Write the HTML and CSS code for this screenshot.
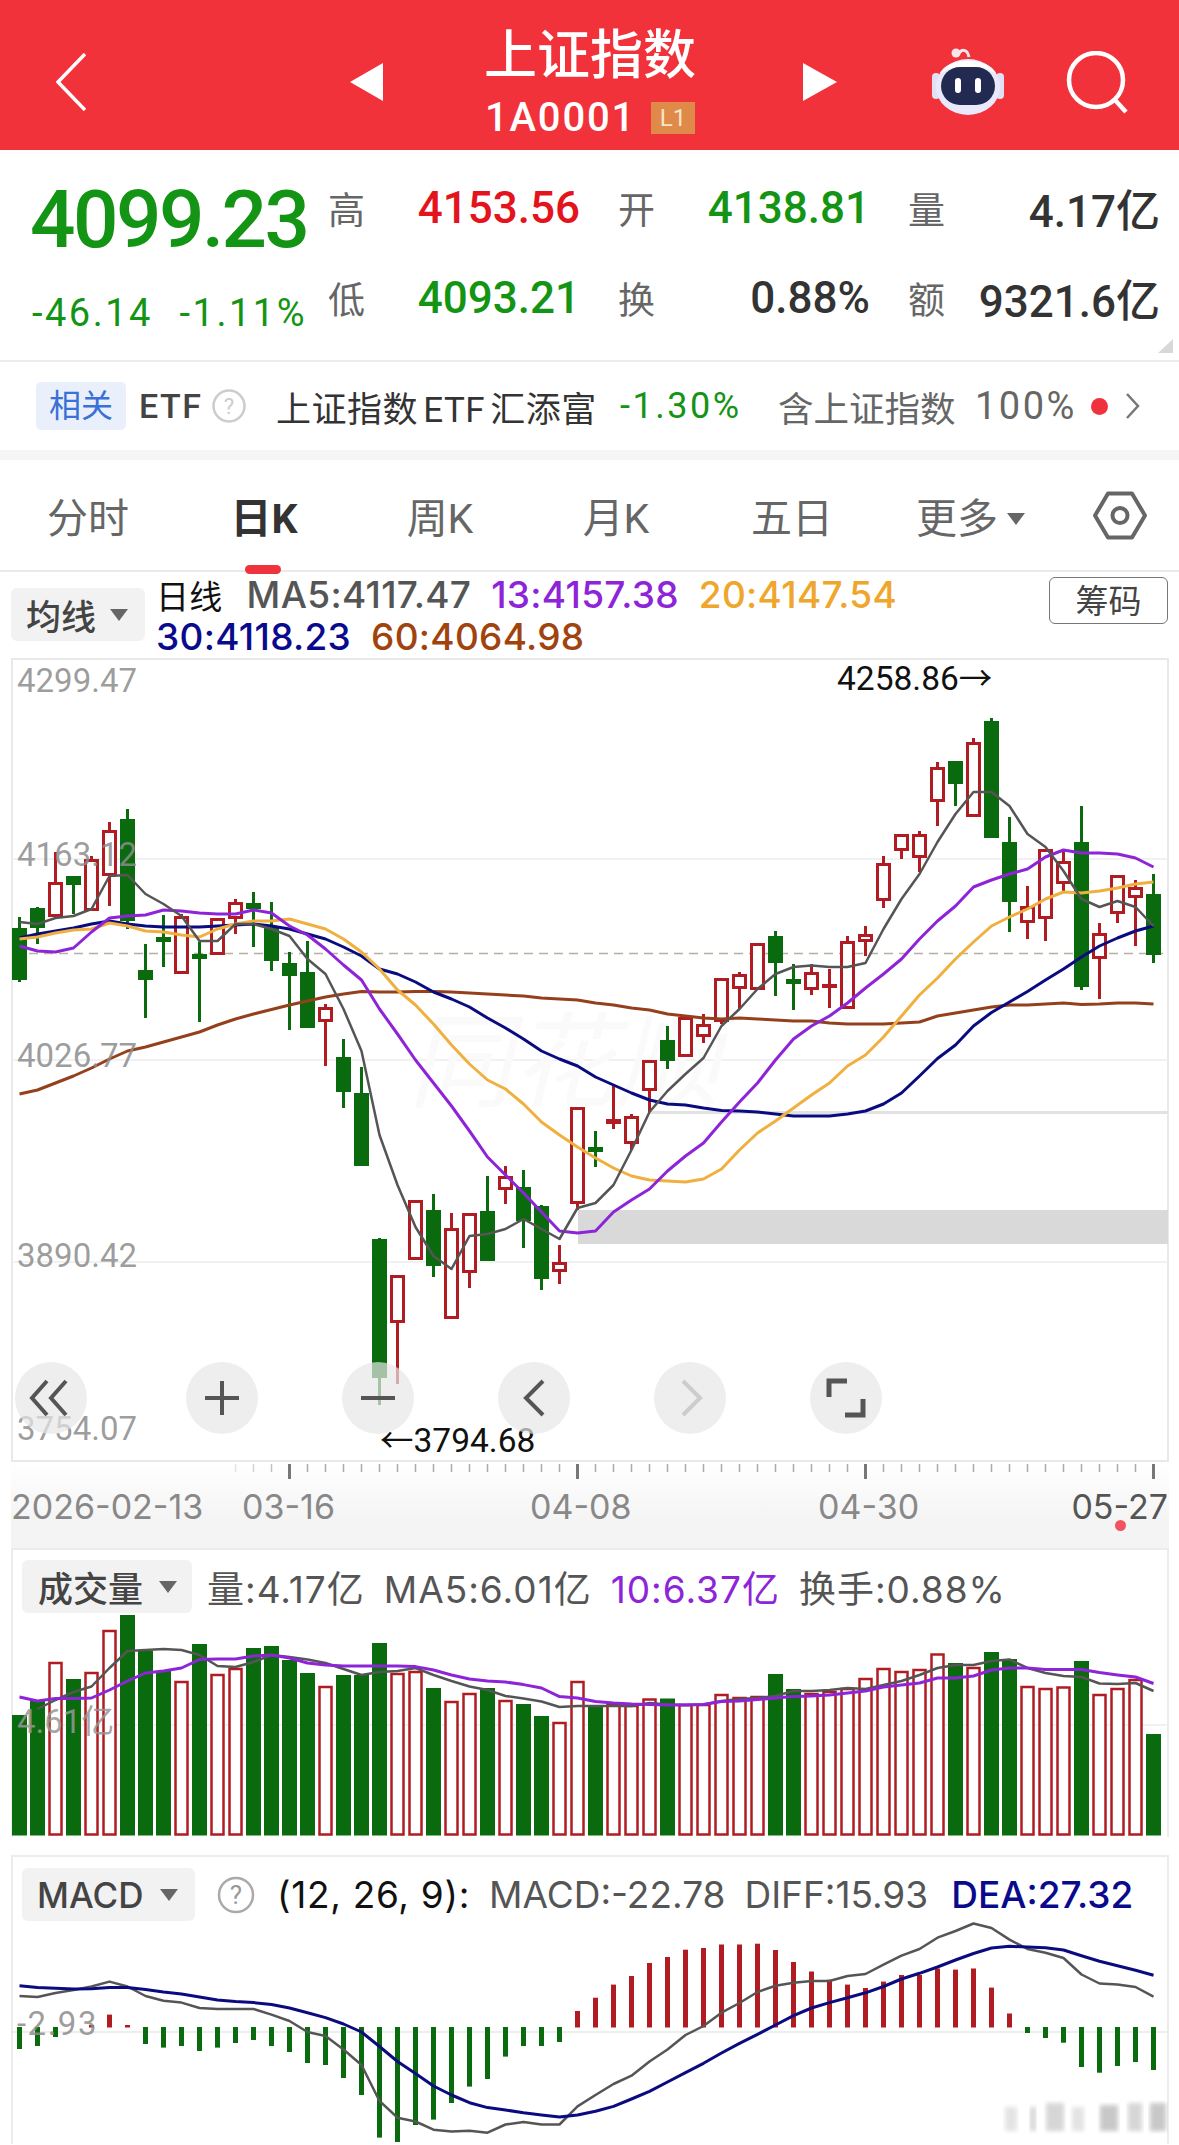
FILE: index.html
```html
<!DOCTYPE html>
<html lang="zh">
<head>
<meta charset="utf-8">
<title>上证指数</title>
<link rel="stylesheet" href="styles.css">
</head>
<body>
<header class="hdr">
  <svg class="ic-back" width="30" height="58" viewBox="0 0 30 58"><path d="M29 1 2 29l27 28" fill="none" stroke="#fff" stroke-width="3.5"/></svg>
  <span class="tri tri-l"></span>
  <div class="title">
    <div class="title-name">上证指数</div>
    <div class="title-code"><span>1A0001</span><span class="badge">L1</span></div>
  </div>
  <span class="tri tri-r"></span>
  <svg class="ic-robot" width="76" height="68" viewBox="0 0 76 68">
    <path d="M28 8c3-6 9-7 11 2" fill="none" stroke="#f4e8ee" stroke-width="3"/>
    <circle cx="26" cy="6" r="4.5" fill="#f6e6ea"/>
    <rect x="2" y="26" width="8" height="26" rx="4" fill="#dfe0f5"/>
    <rect x="66" y="26" width="8" height="26" rx="4" fill="#dfe0f5"/>
    <ellipse cx="38" cy="40" rx="32" ry="28" fill="#e9e9fb"/>
    <path d="M9 28C16 9 60 9 67 28 58 17 18 17 9 28Z" fill="#fff"/>
    <rect x="11" y="20" width="54" height="38" rx="19" fill="#232a52"/>
    <rect x="25" y="31" width="6" height="15" rx="3" fill="#fff"/>
    <rect x="45" y="31" width="6" height="15" rx="3" fill="#fff"/>
  </svg>
  <svg class="ic-search" width="66" height="66" viewBox="0 0 66 66"><circle cx="30" cy="29" r="27" fill="none" stroke="#fff" stroke-width="4.5"/><path d="M49 49l11 12" stroke="#fff" stroke-width="4.5"/></svg>
</header>

<section class="stats">
  <div class="quote">
    <div class="price">4099.23</div>
    <div class="change"><span>-46.14</span><span>-1.11%</span></div>
  </div>
  <div class="grid">
    <div class="cell"><span class="lab">高</span><span class="val up">4153.56</span></div>
    <div class="cell"><span class="lab">开</span><span class="val dn">4138.81</span></div>
    <div class="cell"><span class="lab">量</span><span class="val">4.17亿</span></div>
    <div class="cell"><span class="lab">低</span><span class="val dn">4093.21</span></div>
    <div class="cell"><span class="lab">换</span><span class="val">0.88%</span></div>
    <div class="cell"><span class="lab">额</span><span class="val">9321.6亿</span></div>
  </div>
  <span class="corner"></span>
</section>

<section class="etf">
  <span class="etf-tag">相关</span>
  <span class="etf-name">ETF</span>
  <svg class="q q-etf" width="34" height="34" viewBox="0 0 34 34"><circle cx="17" cy="17" r="15.5" fill="none" stroke="#ccc" stroke-width="2.5"/><text x="17" y="25" class="q-t q-t-light">?</text></svg>
  <span class="etf-fund">上证指数 ETF 汇添富</span>
  <span class="etf-pct">-1.30%</span>
  <span class="etf-inc">含上证指数</span>
  <span class="etf-num">100%</span>
  <span class="etf-dot"></span>
  <svg class="etf-more" width="14" height="26" viewBox="0 0 14 26"><path d="M1 1l11 12L1 25" fill="none" stroke="#777" stroke-width="2.5"/></svg>
</section>

<nav class="tabs">
  <span class="tab">分时</span>
  <span class="tab tab-on">日K</span>
  <span class="tab">周K</span>
  <span class="tab">月K</span>
  <span class="tab">五日</span>
  <span class="tab tab-more">更多<i class="caret caret-tab"></i></span>
  <svg class="ic-hex" width="54" height="49" viewBox="0 0 54 49"><path d="M2 24.500 15 2.500h24l13 22-13 22H15Z" fill="none" stroke="#666" stroke-width="4" stroke-linejoin="round"/><circle cx="27" cy="24.500" r="7.500" fill="none" stroke="#666" stroke-width="4"/></svg>
</nav>

<section class="legend">
  <div class="sel sel-ma">均线<i class="caret"></i></div>
  <div class="legend-lines">
    <div class="leg-row">
      <span class="leg-name">日线</span>
      <span class="c-gray">MA5:4117.47</span>
      <span class="c-purple">13:4157.38</span>
      <span class="c-orange">20:4147.54</span>
    </div>
    <div class="leg-row">
      <span class="c-navy">30:4118.23</span>
      <span class="c-brown">60:4064.98</span>
    </div>
  </div>
  <div class="chip">筹码</div>
</section>

<section class="main">
  <svg id="kline" class="plot" width="1158" height="804" viewBox="11 659 1158 804"></svg>
  <span class="plabel p1">4299.47</span>
  <span class="plabel p2">4163.12</span>
  <span class="plabel p3">4026.77</span>
  <span class="plabel p4">3890.42</span>
  <span class="plabel p5">3754.07</span>
  <span class="extreme ex-hi">4258.86→</span>
  <span class="extreme ex-lo">←3794.68</span>
  <div class="fabs">
    <span class="fab fab-first"><svg width="72" height="72" viewBox="0 0 72 72"><path d="M32 19 17 36l15 17M51 19 36 36l15 17" fill="none" stroke="#555" stroke-width="4"/></svg></span>
    <span class="fab"><svg width="72" height="72" viewBox="0 0 72 72"><path d="M19 36h34M36 19v34" stroke="#555" stroke-width="4"/></svg></span>
    <span class="fab"><svg width="72" height="72" viewBox="0 0 72 72"><path d="M19 36h34" stroke="#555" stroke-width="4"/></svg></span>
    <span class="fab"><svg width="72" height="72" viewBox="0 0 72 72"><path d="M45 19 28 36l17 17" fill="none" stroke="#555" stroke-width="4"/></svg></span>
    <span class="fab"><svg width="72" height="72" viewBox="0 0 72 72"><path d="M29 19l17 17-17 17" fill="none" stroke="#ccc" stroke-width="4"/></svg></span>
    <span class="fab"><svg width="72" height="72" viewBox="0 0 72 72"><path d="M37 19H19v16M53 37v16H35" fill="none" stroke="#555" stroke-width="5"/></svg></span>
  </div>
</section>

<section class="xaxis">
  <svg id="ticks" class="ticks" width="1158" height="20" viewBox="11 1463 1158 20"></svg>
  <span class="xl x1">2026-02-13</span>
  <span class="xl x2">03-16</span>
  <span class="xl x3">04-08</span>
  <span class="xl x4">04-30</span>
  <span class="xl x5">05-27</span>
  <span class="xdot"></span>
</section>

<section class="panel panel-vol">
  <div class="pnl-head pnl-head-v">
    <div class="sel sel-vol">成交量<i class="caret"></i></div>
    <span class="c-gray">量:4.17亿</span>
    <span class="c-gray">MA5:6.01亿</span>
    <span class="c-purple">10:6.37亿</span>
    <span class="c-gray">换手:0.88%</span>
  </div>
  <svg id="vol" class="plot" width="1158" height="287" viewBox="11 1551 1158 287"></svg>
  <span class="plabel vl">4.61亿</span>
</section>

<section class="panel panel-macd">
  <div class="pnl-head pnl-head-m">
    <div class="sel sel-macd">MACD<i class="caret"></i></div>
    <svg class="q q-macd" width="38" height="38" viewBox="0 0 38 38"><circle cx="19" cy="19" r="17" fill="none" stroke="#aaa" stroke-width="2.500"/><text x="19" y="28" class="q-t">?</text></svg>
    <span class="c-black c-params">(12, 26, 9):</span>
    <span class="c-gray">MACD:-22.78</span>
    <span class="c-gray">DIFF:15.93</span>
    <span class="c-navy c-b">DEA:27.32</span>
  </div>
  <svg id="macd" class="plot" width="1158" height="287" viewBox="11 1858 1158 287"></svg>
  <span class="plabel ml">-2.93</span>
</section>

<script src="chart.js"></script>
</body>
</html>
```

FILE: styles.css
```css
* { box-sizing: border-box; }
html, body { margin: 0; padding: 0; background: #fff; }
body {
  width: 1179px;
  height: 2145px;
  overflow: hidden;
  font-family: Roboto, "Noto Sans CJK SC", sans-serif;
  color: #333;
}

/* header */
.hdr {
  height: 150px;
  background: #f1323a;
  display: flex;
  align-items: center;
  padding-left: 56px;
  color: #fff;
}
.ic-back { margin-top: 14px; }
.tri { width: 0; height: 0; border-style: solid; margin-top: 14px; }
.tri-l { margin-left: 264px; border-width: 19px 33px 19px 0; border-color: transparent #fff transparent transparent; }
.tri-r { margin-left: 108px; border-width: 19px 0 19px 34px; border-color: transparent transparent transparent #fff; }
.title { margin-left: 101px; width: 211px; white-space: nowrap; }
.title-name { font-size: 53px; line-height: 60px; font-weight: 500; margin-top: 16px; }
.title-code { display: flex; align-items: center; gap: 15px; font-size: 40px; line-height: 44px; font-weight: 500; letter-spacing: 1.800px; padding-left: 1px; margin-top: 10px; }
.badge { width: 47px; height: 32px; background: #e08a4a; color: #f5e6c8; font-size: 24px; line-height: 32px; text-align: center; letter-spacing: 0; font-weight: 400; }
.ic-robot { margin-left: 93px; margin-top: 12px; }
.ic-search { margin-left: 60px; margin-top: 18px; }

/* quote block */
.stats {
  position: relative;
  height: 212px;
  display: flex;
  border-bottom: 2px solid #ececec;
}
.quote { width: 328px; padding: 25px 21px 0 30px; }
.price { font-size: 80px; line-height: 90px; font-weight: 500; letter-spacing: -2.500px; color: #149414; }
.change { display: flex; justify-content: space-between; font-size: 38px; line-height: 96px; letter-spacing: 2.500px; color: #149414; padding-left: 2px; }
.grid {
  width: 832px;
  padding-top: 13px;
  display: grid;
  grid-template-columns: repeat(3, 252px);
  grid-auto-rows: 90px;
  column-gap: 38px;
}
.cell { display: flex; justify-content: space-between; align-items: center; }
.lab { font-size: 37px; color: #666; }
.val { font-size: 44px; font-weight: 500; color: #333; }
.val.up { color: #e3141c; }
.val.dn { color: #149414; }
.corner { position: absolute; right: 6px; bottom: 7px; width: 0; height: 0; border-style: solid; border-width: 0 0 14px 15px; border-color: transparent transparent #d8d8d8 transparent; }

/* ETF strip */
.etf {
  height: 88px;
  display: flex;
  align-items: center;
  padding-left: 36px;
  font-size: 35px;
  white-space: nowrap;
}
.etf-tag { width: 90px; height: 48px; border-radius: 5px; background: #e9f0fb; color: #3a70d8; font-size: 32px; line-height: 48px; text-align: center; }
.etf-name { margin-left: 13px; width: 64px; font-size: 34px; font-weight: 500; letter-spacing: 1.500px; color: #444; }
.q-etf { margin-left: 9px; }
.q-t { font-family: Roboto, sans-serif; font-size: 26px; fill: #999; text-anchor: middle; }
.q-t-light { font-size: 22px; fill: #ccc; }
.etf-fund { margin-left: 30px; width: 344px; word-spacing: -4px; letter-spacing: .5px; color: #333; }
.etf-pct { width: 158px; font-size: 36px; letter-spacing: 2.500px; color: #149414; }
.etf-inc { width: 197px; font-size: 35.500px; color: #666; }
.etf-num { width: 115px; font-size: 38px; letter-spacing: 2.500px; color: #666; }
.etf-dot { width: 17px; height: 17px; border-radius: 50%; background: #f0323c; margin-left: 1px; }
.etf-more { margin-left: 18px; }

/* tabs */
.tabs {
  height: 122px;
  border-top: 10px solid #f5f5f5;
  border-bottom: 2px solid #eaeaea;
  display: grid;
  grid-template-columns: repeat(6, 176px) 1fr;
  align-items: center;
  font-size: 41px;
  color: #666;
}
.tab { position: relative; text-align: center; }
.tab-on { color: #333; font-weight: 700; }
.tab-on::after { content: ""; position: absolute; left: 69px; bottom: -29px; width: 36px; height: 9px; border-radius: 5px; background: #f0323c; }
.tab-more { padding-left: 5px; }
.ic-hex { margin-left: 37px; }
.caret { display: inline-block; width: 0; height: 0; margin-left: 14px; vertical-align: 3px; border-style: solid; border-width: 12px 9px 0 9px; border-color: #666 transparent transparent transparent; }
.caret-tab { margin-left: 9px; vertical-align: 8px; }

/* legend */
.legend {
  position: relative;
  height: 86px;
  padding-left: 11px;
  display: flex;
  font-family: Inter, "Noto Sans CJK SC", sans-serif;
  font-size: 37px;
  font-weight: 500;
  letter-spacing: .3px;
}
.sel { background: #f2f2f2; border-radius: 6px; color: #444; display: flex; align-items: center; font-weight: 500; letter-spacing: 0; }
.sel-ma { width: 134px; height: 53px; margin-top: 16px; padding-left: 15px; font-family: "Noto Sans CJK SC", sans-serif; font-size: 35px; }
.legend-lines { margin-left: 11px; padding-top: 2px; }
.leg-row { display: flex; gap: 20px; line-height: 42px; white-space: nowrap; }
.leg-name { color: #111; font-family: "Noto Sans CJK SC", sans-serif; font-size: 33px; font-weight: 400; margin-right: 4px; }
.c-gray { color: #555; }
.c-purple { color: #8e24d8; }
.c-orange { color: #efa62c; }
.c-navy { color: #0a0a8c; }
.c-brown { color: #a0430f; }
.c-black { color: #111; }
.c-b { font-weight: 500; margin-left: 4px; }
.chip { position: absolute; left: 1049px; top: 5px; width: 119px; height: 47px; border: 1.500px solid #777; border-radius: 6px; font-family: "Noto Sans CJK SC", sans-serif; font-size: 33px; font-weight: 400; letter-spacing: 0; line-height: 43px; text-align: center; color: #444; }

/* price chart */
.main {
  position: relative;
  margin-left: 11px;
  width: 1158px;
  height: 804px;
}
.plot { display: block; }
.plabel { position: absolute; left: 6px; font-size: 33px; line-height: 34px; color: rgba(140,140,140,.85); white-space: nowrap; }
.p1 { top: 6px; }
.p2 { top: 180px; }
.p3 { top: 381px; }
.p4 { top: 581px; }
.p5 { top: 754px; }
.extreme { position: absolute; font-size: 33.500px; line-height: 34px; color: #111; white-space: nowrap; }
.ex-hi { left: 826px; top: 4px; }
.ex-lo { left: 369px; top: 766px; }
.fabs { position: absolute; left: 4px; top: 704px; display: flex; gap: 84px; }
.fab { width: 72px; height: 72px; border-radius: 50%; background: rgba(231,231,231,.7); }
.fab-first { margin-right: 15px; }

/* date axis */
.xaxis {
  position: relative;
  margin-left: 11px;
  width: 1158px;
  height: 86px;
  background: linear-gradient(#fff, #f4f4f4 70%);
}
.ticks { display: block; }
.xl { position: absolute; top: 27px; font-family: Inter, Roboto, sans-serif; font-size: 34px; line-height: 36px; color: #888; white-space: nowrap; }
.x1 { left: 0; }
.x2 { left: 231px; }
.x3 { left: 519px; }
.x4 { left: 807px; }
.x5 { right: 1px; color: #555; }
.xdot { position: absolute; left: 1104px; top: 58px; width: 11px; height: 11px; border-radius: 50%; background: #f0555e; }

/* lower panels */
.panel {
  position: relative;
  margin-left: 11px;
  width: 1158px;
  height: 289px;
  border: 2px solid #ececec;
  border-bottom: 0;
}
.panel .plot { position: absolute; left: -2px; top: 0; }
.panel-macd { margin-top: 18px; }
.pnl-head {
  position: relative;
  z-index: 1;
  display: flex;
  align-items: center;
  gap: 19px;
  height: 53px;
  margin: 10px 0 0 9px;
  font-family: Inter, "Noto Sans CJK SC", sans-serif;
  font-size: 37px;
  white-space: nowrap;
}
.pnl-head-v { letter-spacing: 1px; }
.pnl-head-m { margin-top: 11px; }
.sel-vol { width: 170px; height: 53px; padding-left: 16px; font-family: "Noto Sans CJK SC", sans-serif; font-size: 35px; flex: none; margin-right: -4px; }
.sel-vol .caret { margin-left: 16px; }
.sel-macd { width: 173px; height: 53px; padding-left: 15px; font-size: 35px; flex: none; }
.sel-macd .caret { margin-left: 17px; }
.q-macd { margin: 0 3px 0 3px; flex: none; }
.c-params { letter-spacing: .7px; }
.vl { left: 4px; top: 155px; color: rgba(150,150,150,.85); }
.ml { left: 4px; top: 150px; letter-spacing: 1.500px; }
```

FILE: chart.js
```js
(function () {
  var NS = 'http://www.w3.org/2000/svg';
  var GREEN = '#0a6a0e', RED = '#b01c22';
  function X(i) { return 19.5 + 18 * i; }
  function el(svg, tag, attrs, text) {
    var n = document.createElementNS(NS, tag);
    for (var k in attrs) n.setAttribute(k, attrs[k]);
    if (text) n.textContent = text;
    svg.appendChild(n);
    return n;
  }
  function line(svg, ys, color, w, start) {
    var pts = ys.map(function (y, k) { return X(k + (start || 0)) + ',' + y; }).join(' ');
    el(svg, 'polyline', { points: pts, fill: 'none', stroke: color, 'stroke-width': w, 'stroke-linejoin': 'round' });
  }
  function hline(svg, y, c, w, x1, x2, dash) {
    var a = { x1: x1 || 11, x2: x2 || 1169, y1: y, y2: y, stroke: c, 'stroke-width': w };
    if (dash) a['stroke-dasharray'] = dash;
    el(svg, 'line', a);
  }

  /* type, wick top, body top, body bottom, wick bottom */
  var K = [
    'g',918,929,981,983,'g',908,909,929,945,'r',853,883,918,918,'g',877,877,886,915,
    'r',857,860,912,912,'r',823,831,877,907,'g',810,820,922,930,'g',945,971,981,1019,
    'g',916,938,943,968,'r',915,917,975,975,'g',943,955,960,1023,'r',919,919,956,956,
    'r',900,903,920,935,'g',893,904,910,948,'g',903,927,962,972,'g',953,964,977,1031,
    'g',942,973,1029,1029,'r',1005,1008,1023,1067,'g',1040,1058,1093,1109,'g',1068,1094,1167,1167,
    'g',1239,1240,1379,1406,'r',1276,1276,1324,1385,'r',1201,1201,1261,1261,'g',1195,1211,1267,1278,
    'r',1214,1229,1320,1320,'r',1214,1214,1274,1289,'g',1177,1212,1262,1262,'r',1167,1177,1191,1205,
    'g',1171,1188,1222,1249,'g',1206,1207,1280,1291,'r',1246,1263,1273,1285,'r',1108,1108,1205,1211,
    'g',1132,1148,1153,1168,'r',1085,1120,1125,1130,'r',1115,1117,1145,1151,'r',1061,1061,1092,1113,
    'g',1027,1041,1062,1070,'r',1017,1018,1058,1058,'r',1015,1025,1038,1044,'r',979,979,1023,1025,
    'r',973,975,990,1010,'r',944,944,991,991,'g',932,937,964,997,'g',965,980,985,1011,
    'r',965,973,991,996,'r',970,985,989,1009,'r',937,942,1010,1010,'r',927,935,943,957,
    'r',857,864,902,909,'r',835,835,852,860,'r',832,835,859,873,'r',763,768,803,827,
    'g',762,762,785,807,'r',739,743,818,818,'g',719,722,839,839,'g',818,843,903,933,
    'r',887,907,924,940,'r',850,850,920,942,'r',850,862,885,893,'g',807,843,988,991,
    'r',924,934,960,1000,'r',876,876,915,924,'r',881,888,899,947,'g',875,895,956,964
  ];

  var MA5 = [923,925,919,917,910,877,876,895,905,917,942,942,925,925,930,937,960,975,1010,1052,1136,1186,1228,1257,1270,1237,1235,1230,1220,1230,1240,1209,1204,1186,1151,1113,1092,1075,1059,1027,1010,990,975,968,966.5,968,968,964,930,900,875,843,815,793,793,807,835,848,872,900,908,902,908,927];
  var MA13 = [947,952,953,949,933,919,917,916,911,912,914,915,915,911,914,927,936,950,966,981,1010,1035,1061,1084,1107,1132,1158,1176,1194,1213,1232,1234,1232,1213,1201,1190,1172,1157,1144,1123,1103,1084,1061,1040,1027,1017,1004,989,975,960,940,922,907,888,881,875,870,858,851,854,854,855,859,868];
  var MA20 = [940,938,934,931,930,924,927,932,933,936,938,930,925,922,922,920,925,930,940,953,970,991,1006,1025,1046,1065,1081,1090,1105,1123,1136,1148,1159,1169,1177,1181,1182,1183,1180,1170,1151,1134,1122,1109,1096,1084,1067,1056,1038,1017,996,979,960,943,927,918,910,900,893,894,892,889,885,883];
  var MA30 = [939,935,932,929,925,922,925,927,928,928,928,927,926,925,927,930,935,940,948,957,970,975,983,993,1000,1008,1019,1029,1040,1052,1060,1067,1078,1086,1094,1101,1105,1106,1109,1111.5,1112,1113,1115,1117,1117,1117,1115,1112,1105,1094,1077,1059.5,1046,1027,1013.5,1003,992.5,981,970,958,947,939,932,927];
  var MA60 = [1095,1091,1084,1077,1069,1060,1052,1048,1043,1038,1033,1026,1020,1015,1010.5,1006,1002,998,995,992.5,993,993,992.5,992.5,993,994,995,996,997,999,1000,1001,1004,1006,1009,1011,1015,1017,1019,1020,1019,1020,1021,1022,1022,1024,1025,1025,1025,1024,1023,1017,1014,1011,1008,1006,1006,1005,1004,1005.5,1005,1004,1004,1005];

  /* price chart */
  var s = document.getElementById('kline');
  el(s, 'rect', { x: 12, y: 660, width: 1156, height: 802, fill: 'none', stroke: '#e9e9e9', 'stroke-width': 2 });
  hline(s, 860, '#ececec', 1.5);
  hline(s, 1061, '#ececec', 1.5);
  hline(s, 1263, '#ececec', 1.5);
  el(s, 'text', { x: 408, y: 1100, fill: '#fafafa', 'font-size': 104, 'font-style': 'italic', 'font-family': 'Noto Sans CJK SC, sans-serif' }, '同花顺');
  hline(s, 1113.5, '#e2e2e2', 3, 650, 1168);
  el(s, 'rect', { x: 578, y: 1211, width: 590, height: 34, fill: '#d9d9d9' });
  hline(s, 954.5, '#b8b0a0', 1.5, 14, 1168, '9 6');
  for (var j = 0; j < K.length; j += 5) {
    var i = j / 5, cx = X(i), tw = K[j + 1], bt = K[j + 2], bb = K[j + 3], bw = K[j + 4], c = K[j] === 'g' ? GREEN : RED;
    el(s, 'line', { x1: cx, x2: cx, y1: tw, y2: bw, stroke: c, 'stroke-width': 3 });
    if (K[j] === 'g' || bb - bt < 7) {
      el(s, 'rect', { x: cx - 7.5, y: bt, width: 15, height: bb - bt, fill: c });
    } else {
      el(s, 'rect', { x: cx - 6, y: bt + 1.5, width: 12, height: bb - bt - 3, fill: '#fff', stroke: c, 'stroke-width': 3 });
    }
  }
  line(s, MA60, '#94401c', 3);
  line(s, MA30, '#0b0b80', 3);
  line(s, MA20, '#efb040', 3);
  line(s, MA13, '#8e24d8', 3);
  line(s, MA5, '#555', 2.5);

  /* ticks */
  var t = document.getElementById('ticks');
  for (var n = 12; n < 64; n++) {
    var major = n === 15 || n === 31 || n === 47 || n === 63;
    var op = n < 15 ? 0.3 + (n - 12) * 0.2 : 1;
    el(t, 'line', { x1: X(n), x2: X(n), y1: 1465, y2: major ? 1480 : 1473, stroke: major ? '#777' : '#aaa', 'stroke-width': major ? 3 : 1.5, opacity: op });
  }

  /* volume */
  var VOL = [1716,1702,1663,1680,1673,1631,1616,1652,1672,1682,1645,1675,1669,1649,1647,1661,1674,1687,1676,1676,1644,1674,1672,1689,1702,1694,1689,1701,1705,1717,1723,1682,1706,1705,1706,1699.5,1699.5,1705,1705,1695,1698,1697,1675,1690,1694,1692,1689,1679,1669,1672,1670,1654.5,1664,1668,1653,1660,1687,1689,1687.5,1662,1695,1689,1680,1735];
  var vs = document.getElementById('vol');
  hline(vs, 1726, '#ececec', 1.5);
  VOL.forEach(function (top, i) {
    var cx = X(i);
    if (K[i * 5] === 'g') {
      el(vs, 'rect', { x: cx - 7.5, y: top, width: 15, height: 1836.5 - top, fill: GREEN });
    } else {
      el(vs, 'rect', { x: cx - 6, y: top + 1, width: 12, height: 1834.5 - top, fill: '#fff', stroke: RED, 'stroke-width': 2.5 });
    }
  });
  var VMA5 = [1710,1701,1693,1687.5,1669,1652,1651,1650,1651,1656,1667,1668,1663,1656,1658,1660.5,1664,1670,1676,1673,1672,1669,1676,1682,1687.5,1691,1697,1699.5,1702.5,1708,1707,1707,1707,1707,1704,1705.5,1706,1705.5,1702,1700,1699,1697,1692,1692,1691,1689,1690,1686,1682,1676,1669,1666,1666,1662,1660.5,1669,1674,1677,1678,1684.5,1685,1684,1692];
  var VMA10 = [1698,1702,1699.5,1699.5,1699,1691,1682,1674,1672,1669,1660.5,1660,1660,1657,1656,1659,1664,1666,1667,1667,1667,1667,1667.6,1671,1676,1680,1682,1683,1685.6,1689,1697.6,1699,1702.5,1704,1705,1705.5,1706,1706,1705.5,1702.5,1702,1700.6,1699,1697.6,1697,1696,1694,1692,1688,1686,1684,1679,1679,1677,1671,1669,1669,1670.6,1670.6,1670.6,1673.6,1676,1678,1684.5];
  line(vs, VMA5, '#555', 2.5, 1);
  line(vs, VMA10, '#8e24d8', 3);

  /* MACD */
  var BAR = [2050,2047,2038,2030,2026,2015.6,2026,2045,2048.6,2047,2052,2048.6,2044,2041,2047,2053,2064,2066,2079,2096,2138.6,2143,2126,2120.6,2104,2087.6,2080,2057.6,2047,2047,2043,2012,1998.7,1985.6,1977,1964,1958,1950.7,1949,1945.5,1945.5,1944.7,1951,1963,1972.5,1980.7,1985.6,1989,1982.6,1976,1976,1969.5,1970.6,1969.5,1988.6,2014.5,2034,2039,2043.7,2068,2073.7,2067,2063,2071];
  var DIFF = [1997,1998,1994,1991,1987.5,1982.6,1987.5,1997,2001.7,2003.6,2009,2010,2010,2010,2015.6,2022,2033,2037,2050.5,2066,2102,2118.7,2122.5,2130.7,2132.6,2131.8,2133.7,2125.5,2123,2125.5,2125.5,2107.4,2096,2085,2076.7,2062.5,2050.5,2036,2027,2013.7,2004,1993,1986.7,1983.7,1982,1982,1977,1975,1965.7,1956.7,1950,1938.7,1932,1924.5,1929,1940.6,1950,1953.7,1959,1975.5,1984.5,1985.6,1988,1997.6];
  var DEA = [1986.7,1988.5,1989.3,1990,1989.7,1988.6,1988.5,1990.5,1993,1995,1998,2001,2002.6,2003.6,2005.5,2009,2013.7,2018.6,2025,2033,2047.5,2062.5,2074.5,2087,2096,2103.7,2108.6,2111,2113.8,2116,2118,2116,2112.3,2107.4,2100,2092.4,2083,2073.7,2064.3,2054,2044.4,2035.4,2026,2016.7,2009,2003.6,1998.7,1993.8,1987.5,1980,1974.3,1968,1961,1954.5,1949,1947.3,1948,1948.8,1951,1956.7,1962.3,1966.8,1971.3,1976.2];
  var ms = document.getElementById('macd');
  hline(ms, 2033, '#e8e8e8', 1.5);
  BAR.forEach(function (y, i) {
    var cx = X(i);
    if (y > 2028) {
      if (i !== 3) el(ms, 'rect', { x: cx - 2.5, y: 2028, width: 5, height: y - 2028, fill: GREEN });
    } else {
      el(ms, 'rect', { x: cx - 2.5, y: y, width: 5, height: 2028.5 - y, fill: RED });
    }
  });
  line(ms, DIFF, '#555', 2.5);
  line(ms, DEA, '#0b0b80', 3);
  var f = el(ms, 'filter', { id: 'b' });
  el(f, 'feGaussianBlur', { stdDeviation: 2 });
  var WM = [[977, 2100, 20, 34, '#fff'], [1005, 2108, 12, 24, '#ddd'], [1030, 2108, 6, 24, '#ccc'], [1046, 2104, 18, 28, '#ccc'], [1072, 2108, 12, 24, '#ddd'], [1100, 2106, 18, 26, '#bbb'], [1128, 2104, 14, 28, '#ccc'], [1150, 2104, 16, 28, '#bbb']];
  WM.forEach(function (r) {
    el(ms, 'rect', { x: r[0], y: r[1], width: r[2], height: r[3], fill: r[4], filter: 'url(#b)', opacity: 0.8 });
  });
})();
```
